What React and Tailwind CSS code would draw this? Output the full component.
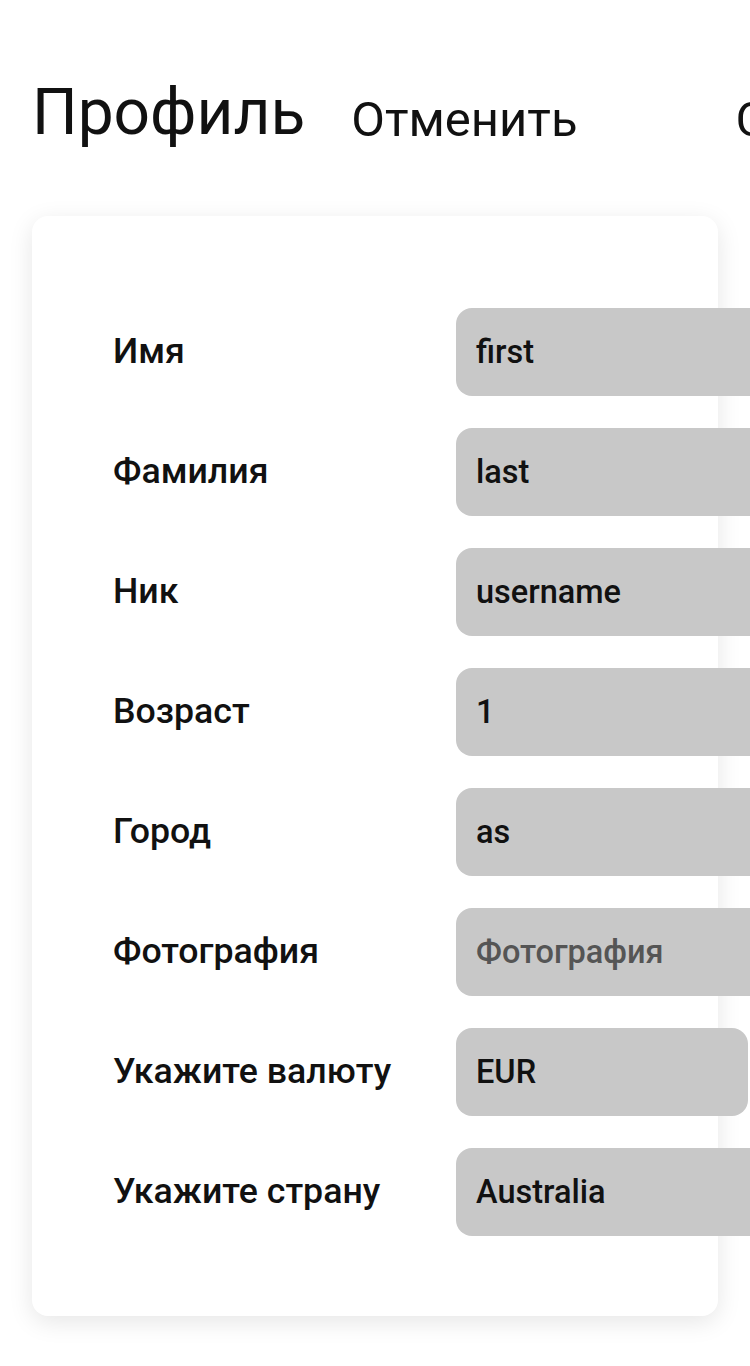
import React from 'react';

const fields = [
  { label: 'Имя', value: 'first' },
  { label: 'Фамилия', value: 'last' },
  { label: 'Ник', value: 'username' },
  { label: 'Возраст', value: '1' },
  { label: 'Город', value: 'as' },
  { label: 'Фотография', value: '', placeholder: 'Фотография' },
  { label: 'Укажите валюту', value: 'EUR', select: true },
  { label: 'Укажите страну', value: 'Australia' },
];

function Row({ label, value, placeholder, select }) {
  return (
    <div className="flex items-center h-[88px]">
      <div className="w-[343px] shrink-0 text-[35.7px] font-medium text-[#111]">{label}</div>
      <div
        className={
          select
            ? 'w-[292px] shrink-0 h-[88px] rounded-[16px] bg-[#c8c8c8] flex items-center pl-[20px] text-[32.5px] font-medium text-[#111]'
            : 'w-[360px] shrink-0 h-[88px] rounded-[16px] bg-[#c8c8c8] flex items-center pl-[20px] text-[32.5px] font-medium text-[#111]'
        }
      >
        {value ? value : <span className="text-[#555]">{placeholder}</span>}
      </div>
    </div>
  );
}

export default function App() {
  return (
    <div className="w-[750px] min-h-[1366px] overflow-hidden bg-white font-['Roboto',sans-serif]">
      <div className="flex items-baseline pl-8 pt-[81px] whitespace-nowrap">
        <h1 className="text-[64px] leading-none font-normal text-[#111]">Профиль</h1>
        <button className="ml-[46px] text-[49px] leading-none text-[#111] relative top-[2px]">Отменить</button>
        <button className="ml-[158px] text-[49px] leading-none text-[#111] relative top-[2px]">Сохранить</button>
      </div>

      <div className="mx-8 mt-[71px] w-[686px] rounded-[16px] bg-white shadow-[0_6px_24px_rgba(0,0,0,0.1)] pt-[92px] pb-[80px] pl-[81px]">
        <div className="flex flex-col gap-8">
          {fields.map((f) => (
            <Row key={f.label} {...f} />
          ))}
        </div>
      </div>
    </div>
  );
}
